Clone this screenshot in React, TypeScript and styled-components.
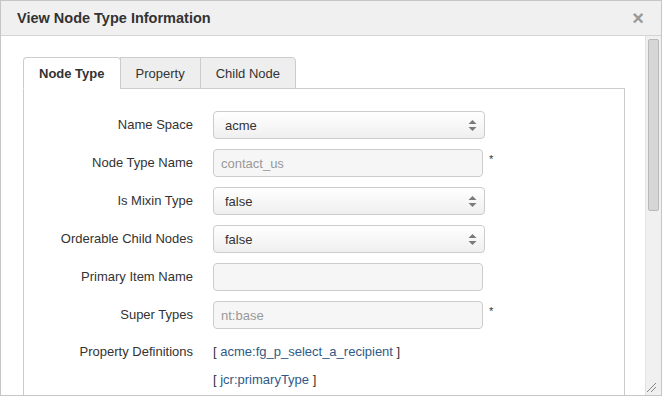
import React from "react";
import styled, { createGlobalStyle } from "styled-components";

const Global = createGlobalStyle`
  html, body { margin: 0; padding: 0; background: #fff; }
  body { font-family: "Liberation Sans", Arial, sans-serif; color: #333; }
  * { box-sizing: border-box; }
`;

const Dialog = styled.div`
  position: relative;
  width: 662px;
  height: 396px;
  border: 1px solid #c6c6c6;
  display: flex;
  flex-direction: column;
  overflow: hidden;
  background: #fff;
`;

const Header = styled.div`
  height: 35px;
  flex-shrink: 0;
  background: #f0f0f0;
  border-bottom: 1px solid #d4d4d4;
  display: flex;
  align-items: center;
  justify-content: space-between;
  padding: 0 17px 0 16px;
`;

const Title = styled.div`
  font-weight: bold;
  font-size: 14.5px;
  color: #333;
`;

const Close = styled.div`
  font-size: 20px;
  font-weight: bold;
  color: #999;
  line-height: 1;
  margin-top: -1px;
`;

const Body = styled.div`
  flex: 1;
  display: flex;
  min-height: 0;
`;

const Content = styled.div`
  flex: 1;
  padding: 21px 20px 0 22px;
  overflow: hidden;
`;

const TabList = styled.div`
  display: flex;
  height: 32px;
  border-bottom: 1px solid #cccccc;
`;

const Tab = styled.div<{ $active?: boolean }>`
  height: 32px;
  padding: 0 15px;
  display: flex;
  align-items: center;
  font-size: 13px;
  color: #333;
  border: 1px solid #cccccc;
  border-radius: ${(p) => (p.$active ? "4px 4px 0 0" : "0")};
  border-bottom-color: ${(p) => (p.$active ? "#fff" : "#cccccc")};
  background: ${(p) => (p.$active ? "#fff" : "#eeeeee")};
  font-weight: ${(p) => (p.$active ? "bold" : "normal")};
  & + & { margin-left: -1px; }
  &:last-child { border-top-right-radius: 4px; }
`;

const Panel = styled.div`
  border: 1px solid #cccccc;
  border-top: none;
  padding: 22px 0 0 0;
  height: 400px;
`;

const Row = styled.div`
  display: flex;
  align-items: center;
  min-height: 28px;
  margin-bottom: 10px;
`;

const TopRow = styled(Row)`
  align-items: flex-start;
  margin-top: -1px;
`;

const Label = styled.div`
  width: 169px;
  flex-shrink: 0;
  margin-right: 20px;
  text-align: right;
  font-size: 13px;
  color: #333;
  line-height: 28px;
`;

const SelectBox = styled.div`
  width: 272px;
  height: 28px;
  border: 1px solid #cccccc;
  border-radius: 4px;
  background: linear-gradient(#ffffff, #efefef);
  display: flex;
  align-items: center;
  justify-content: space-between;
  padding: 0 7px 0 11px;
  font-size: 13px;
  color: #333;
`;

const Input = styled.div`
  width: 270px;
  height: 28px;
  border: 1px solid #cccccc;
  border-radius: 4px;
  background: #f6f6f6;
  display: flex;
  align-items: center;
  padding: 0 7px;
  font-size: 13px;
  color: #999;
`;

const Required = styled.span`
  font-size: 11px;
  color: #333;
  margin-left: 6px;
  align-self: flex-start;
  margin-top: 4px;
`;

const DefList = styled.div`
  display: flex;
  flex-direction: column;
`;

const Def = styled.div`
  font-size: 13px;
  line-height: 28px;
  color: #333;
`;

const DefName = styled.span`
  color: #2f5a86;
`;

const Scrollbar = styled.div`
  width: 16px;
  flex-shrink: 0;
  background: #f0f0f0;
  border-left: 1px solid #e2e2e2;
  padding: 3px 2px 0 2px;
`;

const Thumb = styled.div`
  height: 172px;
  background: #d6d6d6;
  border: 1px solid #b9b9b9;
  border-radius: 2px;
`;

const Grip = styled.svg`
  position: absolute;
  right: 4px;
  bottom: 2px;
`;

const Arrows = () => (
  <svg width="9" height="13" viewBox="0 0 9 13">
    <polygon points="0.5,5 4.5,1 8.5,5" fill="#7a7a7a" />
    <polygon points="0.5,8 8.5,8 4.5,12" fill="#7a7a7a" />
  </svg>
);

const Select = ({ value }: { value: string }) => (
  <SelectBox>
    <span>{value}</span>
    <Arrows />
  </SelectBox>
);

export default function App() {
  return (
    <>
      <Global />
      <Dialog>
        <Header>
          <Title>View Node Type Information</Title>
          <Close>×</Close>
        </Header>
        <Body>
          <Content>
            <TabList>
              <Tab $active>Node Type</Tab>
              <Tab>Property</Tab>
              <Tab>Child Node</Tab>
            </TabList>
            <Panel>
              <Row>
                <Label>Name Space</Label>
                <Select value="acme" />
              </Row>
              <Row>
                <Label>Node Type Name</Label>
                <Input>contact_us</Input>
                <Required>*</Required>
              </Row>
              <Row>
                <Label>Is Mixin Type</Label>
                <Select value="false" />
              </Row>
              <Row>
                <Label>Orderable Child Nodes</Label>
                <Select value="false" />
              </Row>
              <Row>
                <Label>Primary Item Name</Label>
                <Input />
              </Row>
              <Row>
                <Label>Super Types</Label>
                <Input>nt:base</Input>
                <Required>*</Required>
              </Row>
              <TopRow>
                <Label>Property Definitions</Label>
                <DefList>
                  <Def>
                    [ <DefName>acme:fg_p_select_a_recipient</DefName> ]
                  </Def>
                  <Def>
                    [ <DefName>jcr:primaryType</DefName> ]
                  </Def>
                </DefList>
              </TopRow>
            </Panel>
          </Content>
          <Scrollbar>
            <Thumb />
          </Scrollbar>
        </Body>
        <Grip width="11" height="11" viewBox="0 0 11 11">
          <line x1="1" y1="10" x2="10" y2="1" stroke="#888" strokeWidth="1" />
          <line x1="5" y1="10" x2="10" y2="5" stroke="#888" strokeWidth="1" />
        </Grip>
      </Dialog>
    </>
  );
}
